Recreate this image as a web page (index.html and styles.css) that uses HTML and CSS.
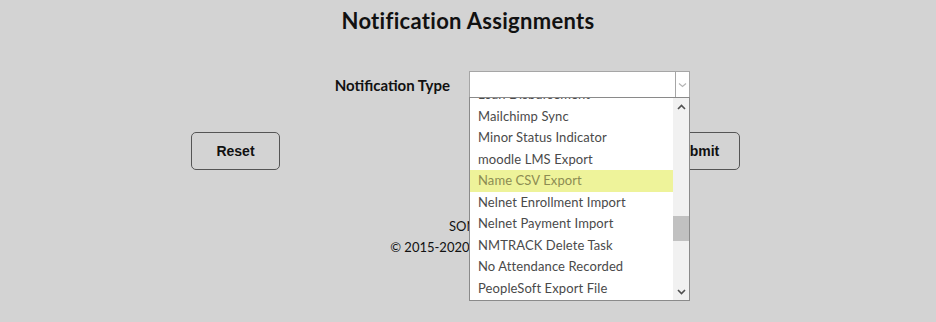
FILE: index.html
```html
<!DOCTYPE html>
<html>
<head>
<meta charset="utf-8">
<link rel="stylesheet" href="styles.css">
</head>
<body>
<div class="page">
  <h1 class="title">Notification Assignments</h1>
  <div class="field-row">
    <label class="field-label">Notification Type</label>
    <div class="select-wrap">
      <div class="select">
        <span class="select-value"></span>
        <span class="select-arrow">
          <svg width="9" height="6" viewBox="0 0 9 6"><path d="M1 1.5 L4.5 4.5 L8 1.5" fill="none" stroke="#b5b5b5" stroke-width="1.2"/></svg>
        </span>
      </div>
      <div class="dropdown">
        <div class="options">
          <div class="option">Loan Disbursement</div>
          <div class="option">Mailchimp Sync</div>
          <div class="option">Minor Status Indicator</div>
          <div class="option">moodle LMS Export</div>
          <div class="option option-hover">Name CSV Export</div>
          <div class="option">Nelnet Enrollment Import</div>
          <div class="option">Nelnet Payment Import</div>
          <div class="option">NMTRACK Delete Task</div>
          <div class="option">No Attendance Recorded</div>
          <div class="option">PeopleSoft Export File</div>
        </div>
        <div class="scrollbar">
          <svg class="sb-up" width="9" height="6" viewBox="0 0 9 6"><path d="M1 5 L4.5 1.5 L8 5" fill="none" stroke="#505050" stroke-width="1.6"/></svg>
          <div class="sb-track"><div class="sb-thumb"></div></div>
          <svg class="sb-down" width="9" height="6" viewBox="0 0 9 6"><path d="M1 1 L4.5 4.5 L8 1" fill="none" stroke="#505050" stroke-width="1.6"/></svg>
        </div>
      </div>
    </div>
  </div>
  <div class="button-row">
    <button class="btn">Reset</button>
    <button class="btn">Submit</button>
  </div>
  <div class="footer">
    <div class="footer-line">SONIS</div>
    <div class="footer-line">© 2015-2020 Jenzabar Inc.</div>
  </div>
</div>
</body>
</html>
```
FILE: styles.css
```css
* { box-sizing: border-box; }
html, body { margin: 0; padding: 0; }
body {
  background: #d3d3d3;
  font-family: "Lato", "Noto Sans", sans-serif;
  color: #111;
  width: 936px;
  height: 322px;
  overflow: hidden;
}
.page { display: flex; flex-direction: column; }
.title {
  margin: 8px 0 0;
  text-align: center;
  font-size: 22px;
  font-weight: 700;
  letter-spacing: 0.3px;
  line-height: 26px;
  color: #111;
}
.field-row {
  display: flex;
  align-items: center;
  margin-top: 37px;
}
.field-label {
  width: 450px;
  text-align: right;
  margin-right: 19px;
  font-size: 15px;
  font-weight: 700;
  color: #111;
}
.select-wrap { position: relative; width: 221px; }
.select {
  display: flex;
  height: 27px;
  background: #fff;
  border: 1px solid #a6a6a6;
}
.select-value { flex: 1; }
.select-arrow {
  width: 14px;
  border-left: 1px solid #a6a6a6;
  display: flex;
  align-items: center;
  justify-content: center;
}
.dropdown {
  position: absolute;
  top: 26px;
  left: 0;
  width: 221px;
  height: 204px;
  background: #fff;
  border: 1px solid #8a8a8a;
  display: flex;
  overflow: hidden;
  z-index: 2;
}
.options {
  flex: 1;
  margin-top: -14px;
}
.option {
  height: 21.5px;
  line-height: 21.5px;
  padding-left: 8px;
  font-size: 13px;
  letter-spacing: 0.1px;
  color: #4a4a4a;
  white-space: nowrap;
}
.option-hover { background: #eef39a; color: #8c8c52; }
.scrollbar {
  width: 16px;
  background: #f1f1f1;
  display: flex;
  flex-direction: column;
  align-items: center;
}
.sb-up { margin-top: 6px; }
.sb-track { flex: 1; width: 100%; position: relative; }
.sb-thumb {
  position: absolute;
  left: 0;
  right: 0;
  top: 106px;
  height: 25px;
  background: #c1c1c1;
}
.sb-down { margin-bottom: 5px; }
.button-row {
  display: flex;
  padding-left: 191px;
  gap: 371px;
  margin-top: 34px;
}
.btn {
  width: 89px;
  height: 38px;
  background: transparent;
  border: 1px solid #555;
  border-radius: 5px;
  font-family: "Liberation Sans", Arial, sans-serif;
  font-size: 14px;
  font-weight: 700;
  color: #111;
}
.footer {
  margin-top: 46px;
  text-align: center;
  font-size: 13px;
  color: #111;
}
.footer-line { height: 21px; line-height: 21px; }
```
